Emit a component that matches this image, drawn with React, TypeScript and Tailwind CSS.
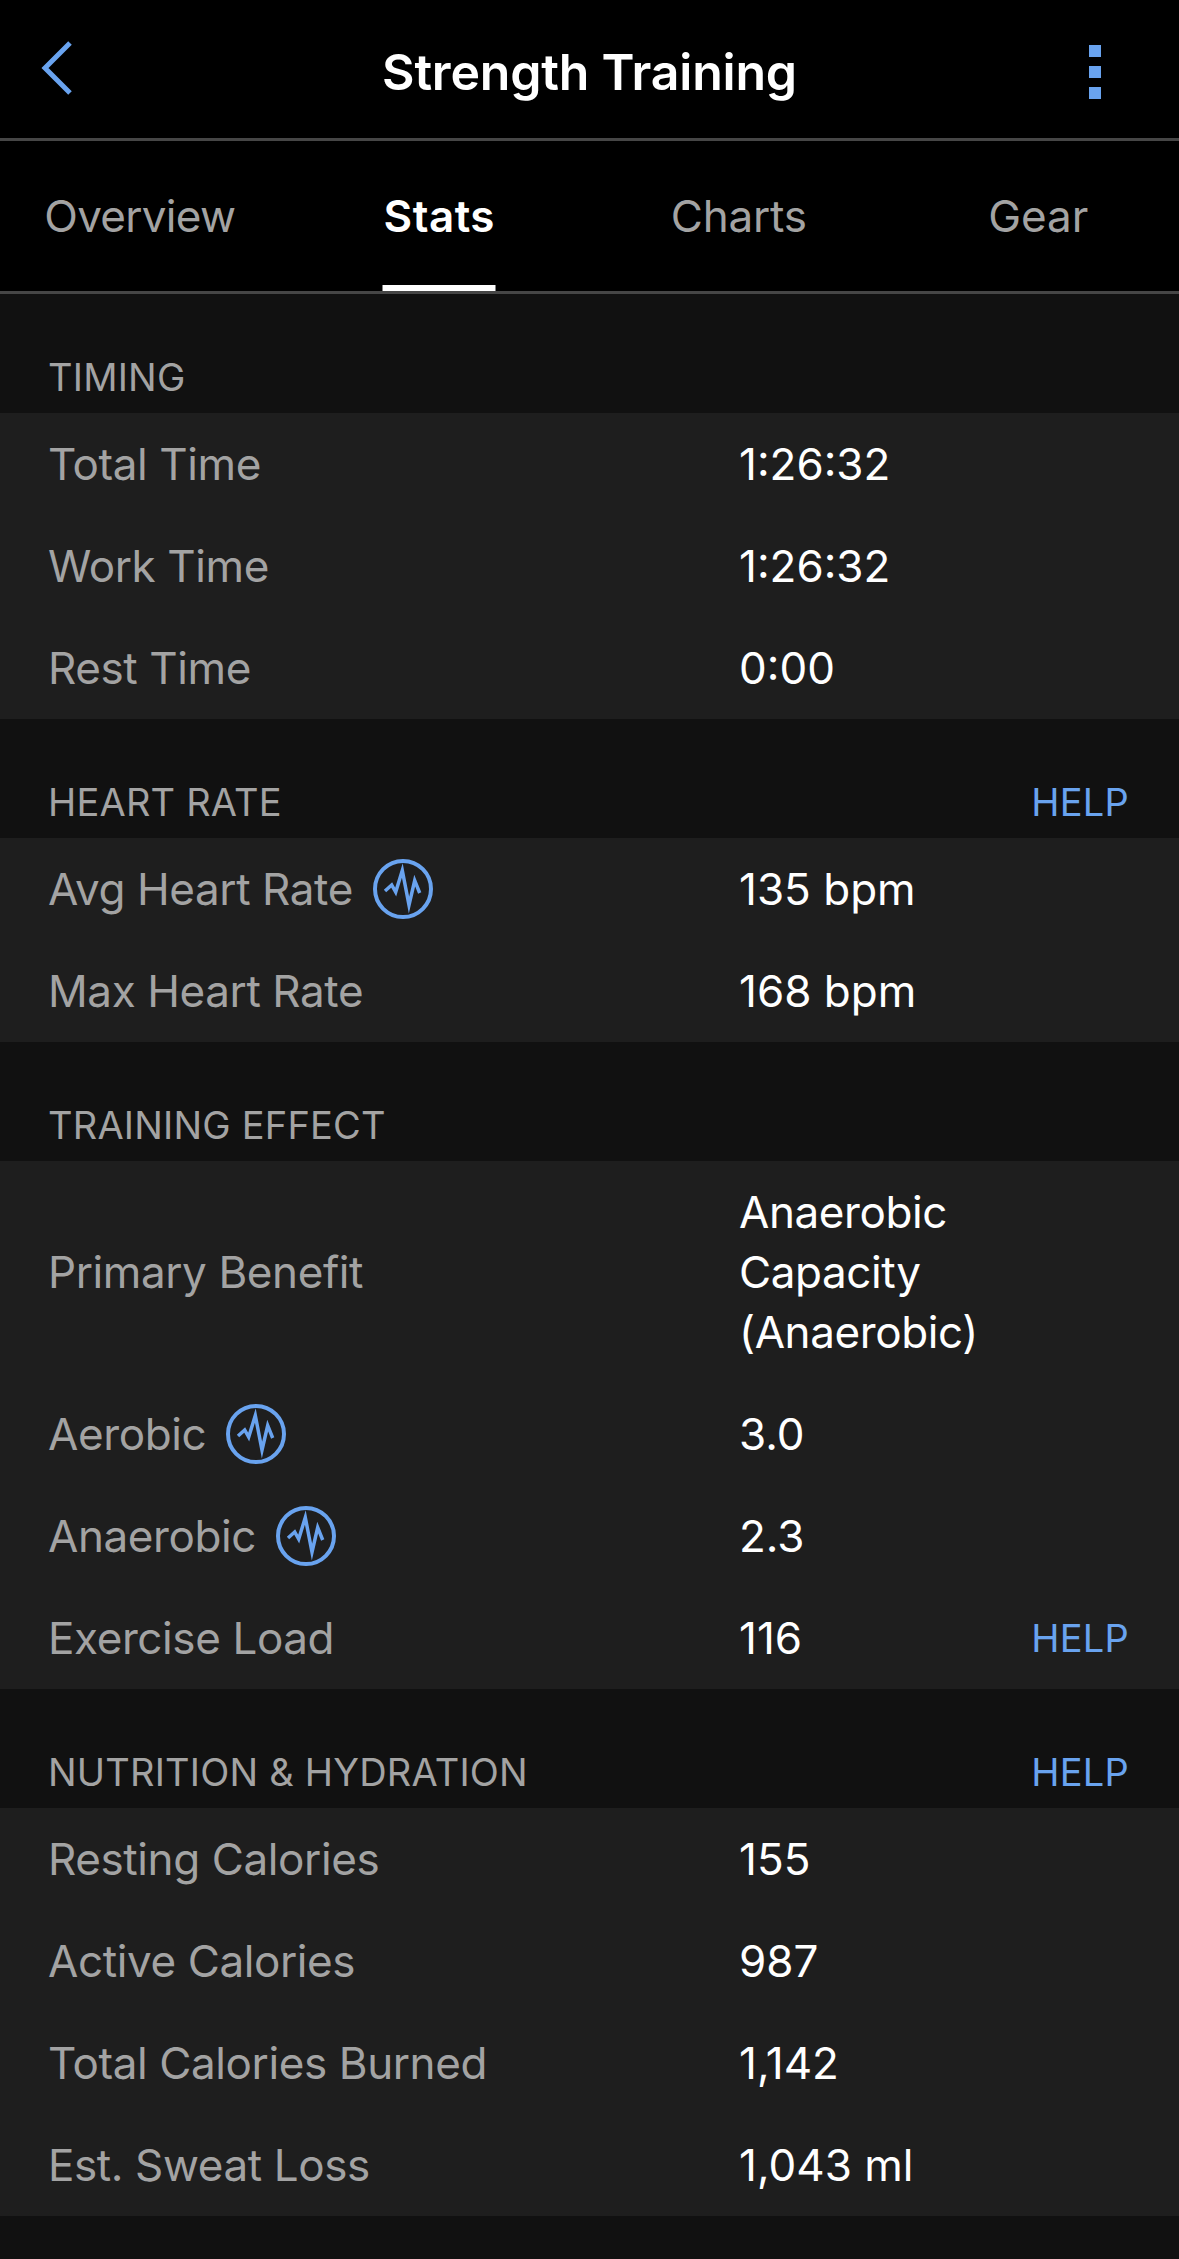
function ZoneIcon() {
  return (
    <svg viewBox="0 0 60 60" className="w-[60px] h-[60px] shrink-0" fill="none" stroke="#69a3ef">
      <circle cx="30" cy="30" r="28" strokeWidth="4" />
      <polyline points="12,32 18.7,26 22.7,33 29.3,11.5 36,46 41.7,21.5 46.7,34" strokeWidth="3.5" strokeMiterlimit="10" />
    </svg>
  );
}

function Section({ title, help, children }: { title: string; help?: boolean; children: React.ReactNode }) {
  return (
    <section>
      <div className="h-[119px] pl-[48px] pr-[50px] pb-[14px] flex items-end justify-between text-[38px] leading-[44px] tracking-[0.2px]">
        <span className="text-[#a3a3a3]">{title}</span>
        {help && <span className="text-[#69a3ef]">HELP</span>}
      </div>
      <div className="bg-[#1e1e1e]">{children}</div>
    </section>
  );
}

function Row({ label, value, icon, help }: { label: string; value: React.ReactNode; icon?: boolean; help?: boolean }) {
  return (
    <div className="grid grid-cols-[691px_1fr] items-center pl-[48px] pr-[50px] py-[21px] text-[44px] leading-[60px]">
      <div className="flex items-center gap-[20px] text-[#a3a3a3] h-[60px] tracking-[-0.4px]">
        <span>{label}</span>
        {icon && <ZoneIcon />}
      </div>
      <div className="flex justify-between text-white">
        <span>{value}</span>
        {help && <span className="text-[38px] tracking-[0.2px] text-[#69a3ef]">HELP</span>}
      </div>
    </div>
  );
}

export default function App() {
  return (
    <div className="w-[1179px] h-[2259px] overflow-hidden bg-[#111111] font-['Inter',sans-serif]">
      {/* Top bar */}
      <header className="h-[141px] bg-black border-b-[3px] border-[#464646] grid grid-cols-[1fr_auto_1fr] items-center px-[78px] pt-[6px]">
        <svg viewBox="0 0 34 54" className="w-[34px] h-[54px] mb-[8px] -ml-[38px]" fill="none" stroke="#69a3ef" strokeWidth="5">
          <polyline points="30,2 5,27 30,52" />
        </svg>
        <h1 className="text-[50px] font-semibold text-white leading-none tracking-[-0.2px]">Strength Training</h1>
        <div className="flex flex-col gap-[9px] items-end">
          <div className="w-[12px] h-[12px] bg-[#69a3ef]" />
          <div className="w-[12px] h-[12px] bg-[#69a3ef]" />
          <div className="w-[12px] h-[12px] bg-[#69a3ef]" />
        </div>
      </header>

      {/* Tabs */}
      <nav className="h-[153px] bg-black border-b-[3px] border-[#464646] overflow-hidden">
        <div className="w-[1198px] -ml-[10px] grid grid-cols-4 h-full text-[44px] text-[#a3a3a3]">
          <div className="flex items-center justify-center tracking-[-0.7px]">Overview</div>
          <div className="relative flex items-center justify-center font-semibold text-white tracking-[0.5px]">
            Stats
            <div className="absolute bottom-0 left-1/2 -translate-x-1/2 w-[113px] h-[6px] bg-white" />
          </div>
          <div className="flex items-center justify-center tracking-[-0.2px]">Charts</div>
          <div className="flex items-center justify-center">Gear</div>
        </div>
      </nav>

      <Section title="TIMING">
        <Row label="Total Time" value="1:26:32" />
        <Row label="Work Time" value="1:26:32" />
        <Row label="Rest Time" value="0:00" />
      </Section>

      <Section title="HEART RATE" help>
        <Row label="Avg Heart Rate" value="135 bpm" icon />
        <Row label="Max Heart Rate" value="168 bpm" />
      </Section>

      <Section title="TRAINING EFFECT">
        <Row
          label="Primary Benefit"
          value={
            <span className="tracking-[-0.4px]">
              Anaerobic
              <br />
              Capacity
              <br />
              (Anaerobic)
            </span>
          }
        />
        <Row label="Aerobic" value="3.0" icon />
        <Row label="Anaerobic" value="2.3" icon />
        <Row label="Exercise Load" value="116" help />
      </Section>

      <Section title="NUTRITION & HYDRATION" help>
        <Row label="Resting Calories" value="155" />
        <Row label="Active Calories" value="987" />
        <Row label="Total Calories Burned" value="1,142" />
        <Row label="Est. Sweat Loss" value="1,043 ml" />
      </Section>
    </div>
  );
}
